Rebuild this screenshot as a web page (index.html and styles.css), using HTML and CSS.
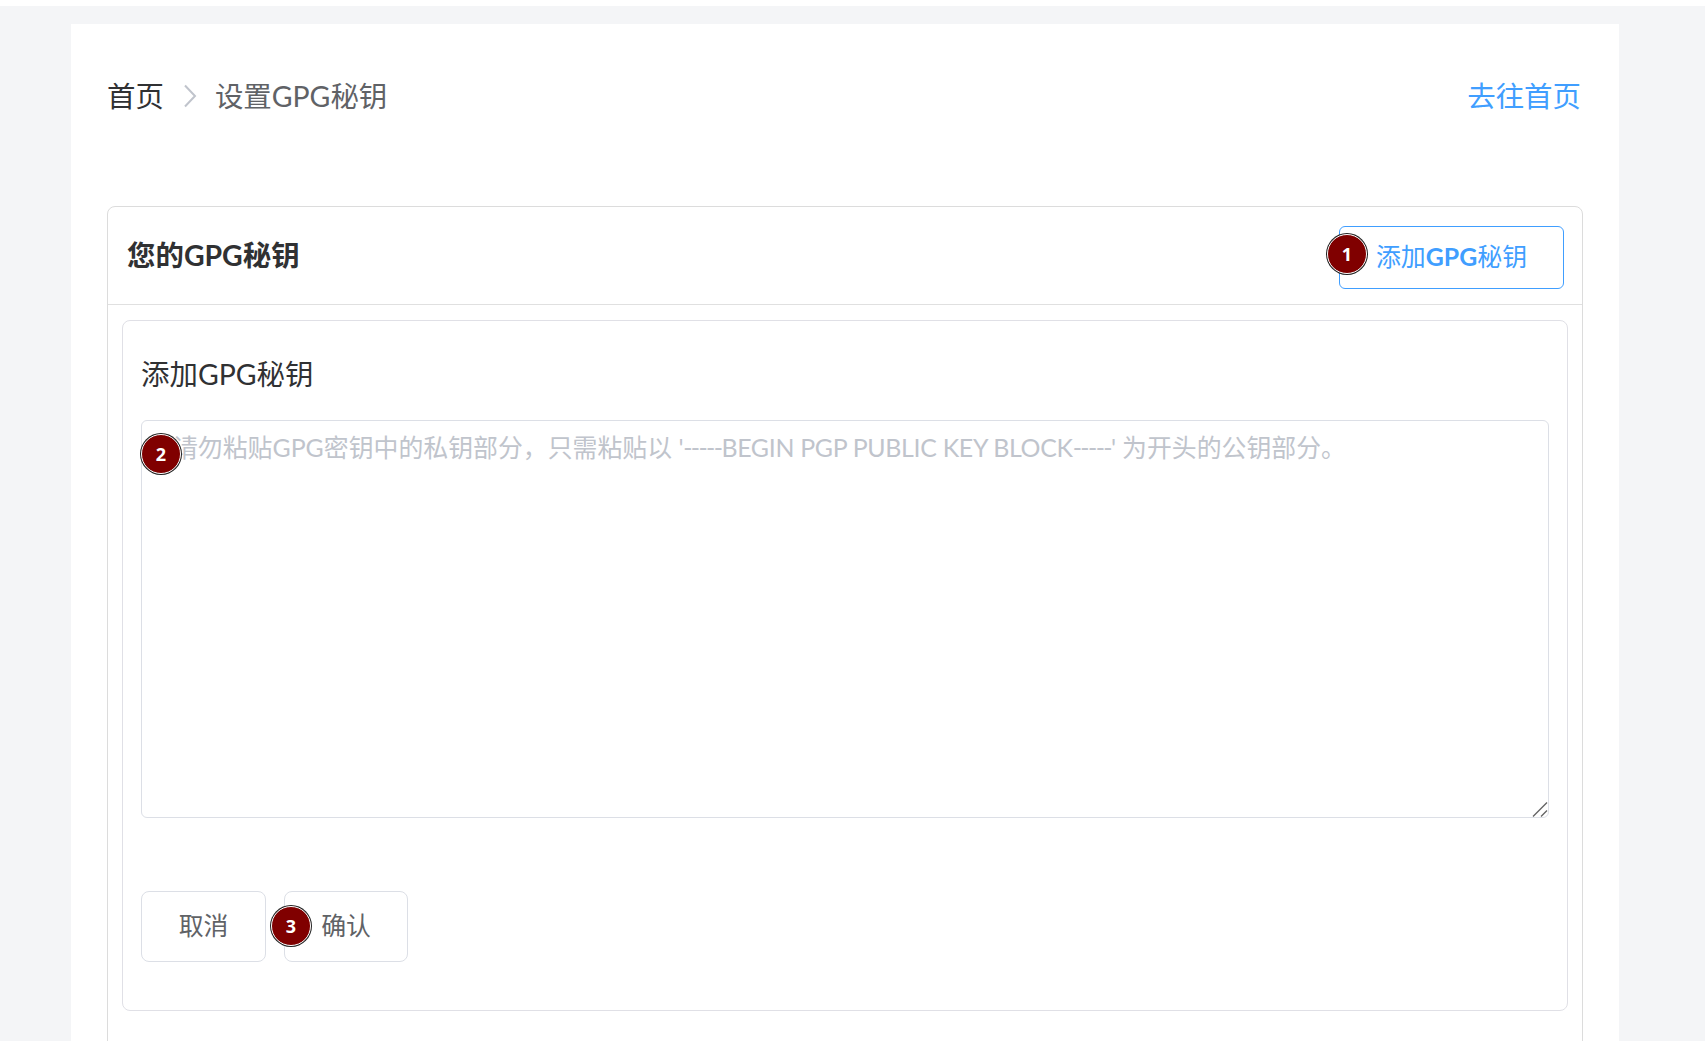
FILE: index.html
```html
<!DOCTYPE html>
<html lang="zh-CN">
<head>
<meta charset="utf-8">
<title>设置GPG秘钥</title>
<link rel="stylesheet" href="styles.css">
</head>
<body>
<div class="top-strip"></div>
<main class="page">
  <div class="crumb-row">
    <nav class="crumbs">
      <span class="crumb-home">首页</span>
      <svg class="crumb-sep" width="14" height="24" viewBox="0 0 14 24"><path d="M2 1.500 L12 12 L2 22.500" fill="none" stroke="#c0c4cc" stroke-width="2"/></svg>
      <span class="crumb-current">设置GPG秘钥</span>
    </nav>
    <a class="home-link">去往首页</a>
  </div>
  <section class="card">
    <header class="card-head">
      <h2 class="card-title">您的GPG秘钥</h2>
      <button class="btn-add"><span class="badge badge-add">1</span>添加<b class="latin">GPG</b>秘钥</button>
    </header>
    <div class="card-body">
      <div class="inner">
        <h3 class="inner-title">添加GPG秘钥</h3>
        <div class="field">
          <textarea class="key-input" aria-label="GPG公钥"></textarea>
          <div class="hint">请勿粘贴GPG密钥中的私钥部分，只需粘贴以 <span class="hint-latin">'<span class="hint-dash">-----</span>BEGIN PGP PUBLIC KEY BLOCK<span class="hint-dash">-----</span>'</span> 为开头的公钥部分。</div>
          <span class="badge badge-field">2</span>
          <svg class="grip" width="16" height="15" viewBox="0 0 16 15"><path d="M1 14.500 L15 0.500 M9 14.500 L15 8.500" fill="none" stroke="#666" stroke-width="1.400"/></svg>
        </div>
        <div class="actions">
          <button class="btn">取消</button>
          <button class="btn btn-confirm"><span class="badge badge-confirm">3</span>确认</button>
        </div>
      </div>
    </div>
  </section>
</main>
</body>
</html>
```
FILE: styles.css
```css
* { box-sizing: border-box; }
html, body { margin: 0; height: 100%; overflow: hidden; }
body {
  background: #f4f5f7;
  font-family: "Lato", "Noto Sans CJK SC", sans-serif;
  color: #303133;
}
.top-strip { height: 6px; background: #fff; }
.page {
  width: 1548px;
  height: 1100px;
  margin: 18px 0 0 71px;
  padding: 0 36px;
  background: #fff;
}
.crumb-row {
  display: flex;
  justify-content: space-between;
  align-items: center;
  height: 182px;
  padding-bottom: 42px;
  font-size: 28.44px;
}
.crumbs { display: flex; align-items: center; }
.crumb-home { color: #303133; }
.crumb-sep { margin: 3px 18px 0 19px; }
.crumb-current { color: #606266; }
.home-link { color: #409eff; padding-right: 2px; }
.card {
  border: 1px solid #dcdcdc;
  border-radius: 8px;
  height: 900px;
}
.card-head {
  display: flex;
  justify-content: space-between;
  align-items: center;
  height: 98px;
  padding: 0 18px 0 19px;
  border-bottom: 1px solid #e0e0e0;
}
.card-title { margin: 0 0 5px; font-size: 28.44px; font-weight: 700; color: #303133; }
.btn-add {
  position: relative;
  width: 225px;
  height: 63px;
  padding: 0 0 4px 36px;
  margin-top: 3px;
  text-align: left;
  background: #fff;
  border: 1px solid #409eff;
  border-radius: 6px;
  color: #409eff;
  font: inherit;
  font-size: 24.89px;
}
.latin { font-weight: 700; }
.card-body { padding: 15px 14px; }
.inner {
  height: 691px;
  padding: 0 18px;
  border: 1px solid #e0e0e6;
  border-radius: 8px;
}
.inner-title {
  margin: 0;
  height: 99px;
  padding-top: 18px;
  line-height: 70px;
  font-size: 28.44px;
  font-weight: 400;
  color: #303133;
}
.field { position: relative; height: 398px; }
.key-input {
  display: block;
  width: 100%;
  height: 398px;
  padding: 9px 31px;
  border: 1px solid #dcdfe6;
  border-radius: 6px;
  outline: none;
  resize: none;
  font: inherit;
  font-size: 24.89px;
  line-height: 35px;
  color: #606266;
  background: transparent;
}
.hint {
  position: absolute;
  left: 32px;
  top: 10px;
  font-size: 24.89px;
  line-height: 35px;
  color: #c0c4cc;
  white-space: nowrap;
  pointer-events: none;
}
.hint-latin { letter-spacing: -0.3px; }
.hint-dash { letter-spacing: -1.6px; }
.grip { position: absolute; right: 1px; bottom: 1px; }
.actions { display: flex; gap: 18px; margin-top: 73px; }
.btn {
  position: relative;
  width: 125px;
  height: 71px;
  padding: 0 0 6px;
  background: #fff;
  border: 1px solid #dcdfe6;
  border-radius: 8px;
  color: #606266;
  font: inherit;
  font-size: 24.89px;
}
.btn-confirm { width: 124px; }
.badge {
  position: absolute;
  width: 40px;
  height: 40px;
  display: flex;
  align-items: center;
  justify-content: center;
  border-radius: 50%;
  background: #800000;
  border: 1px solid #fff;
  box-shadow: 0 0 0 1px #222;
  color: #fff;
  font-family: "Noto Sans", sans-serif;
  font-size: 18px;
  font-weight: 700;
  line-height: 1;
}
.badge-add { left: -13px; top: 7px; }
.badge-field { left: 0; top: 14px; }
.badge-confirm { left: -14px; top: 14px; }
```
